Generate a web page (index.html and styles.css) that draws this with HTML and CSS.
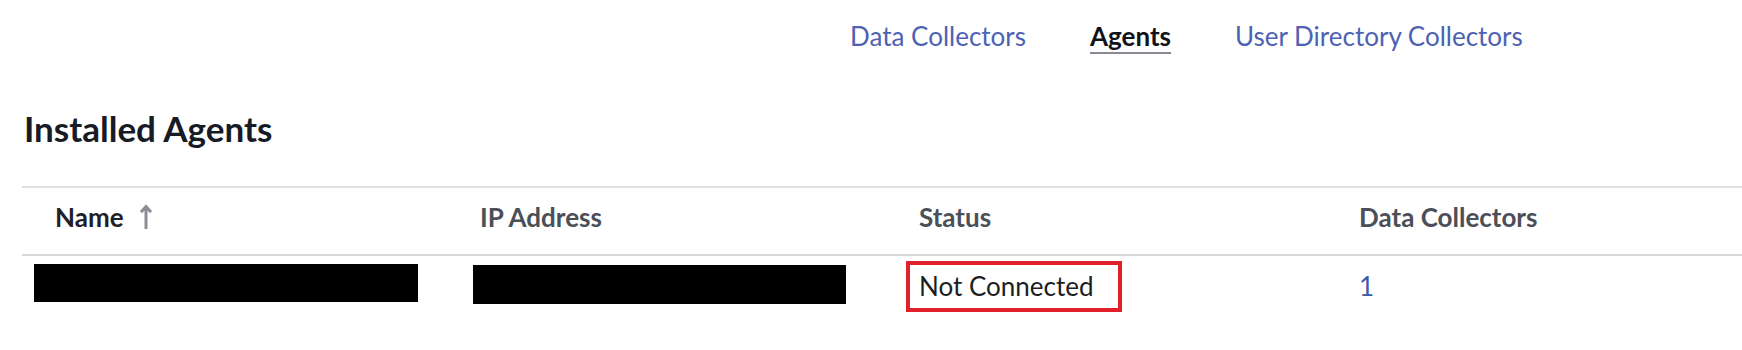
FILE: index.html
```html
<!DOCTYPE html>
<html lang="en">
<head>
<meta charset="utf-8">
<title>Installed Agents</title>
<link rel="stylesheet" href="styles.css">
</head>
<body>
<nav class="tabs">
  <a class="tab" href="#">Data Collectors</a>
  <a class="tab tab-active" href="#">Agents</a>
  <a class="tab" href="#">User Directory Collectors</a>
</nav>
<main class="content">
  <h1 class="title">Installed Agents</h1>
  <div class="table">
    <div class="row head">
      <div class="cell th sorted">Name
        <svg class="sort-icon" width="12" height="25" viewBox="0 0 12 25" aria-hidden="true">
          <path d="M6 2.5 V25 M1 8.2 L6 2.5 L11 8.2" fill="none" stroke="#8c8e96" stroke-width="3" stroke-linecap="butt" stroke-linejoin="miter"/>
        </svg>
      </div>
      <div class="cell th">IP Address</div>
      <div class="cell th">Status</div>
      <div class="cell th">Data Collectors</div>
    </div>
    <div class="row body">
      <div class="cell td name-cell"><span class="redact redact-name"></span></div>
      <div class="cell td ip-cell"><span class="redact redact-ip"></span></div>
      <div class="cell td status-cell"><span class="status-box">Not Connected</span></div>
      <div class="cell td count-cell"><a class="link" href="#">1</a></div>
    </div>
  </div>
</main>
</body>
</html>
```

FILE: styles.css
```css
* { box-sizing: border-box; }

body {
  margin: 0;
  background: #ffffff;
  font-family: "Lato", "Open Sans", sans-serif;
  color: #1f2026;
}

.tabs {
  display: flex;
  gap: 64px;
  padding: 21px 0 0 850px;
  height: 54px;
}

.tab {
  display: inline-block;
  font-size: 26px;
  line-height: 31px;
  height: 33px;
  color: #4d62b3;
  text-decoration: none;
}

.tab-active {
  color: #121318;
  font-weight: 700;
  border-bottom: 2px solid #8a8b92;
}

.content {
  padding-left: 22px;
}

.title {
  margin: 53px 0 0 0;
  font-size: 35px;
  line-height: 42px;
  font-weight: 700;
  color: #161b26;
  padding-left: 2px;
}

.table {
  margin-top: 37px;
  border-top: 2px solid #e0e0e3;
}

.row {
  display: grid;
  grid-template-columns: 425px 439px 440px 1fr;
}

.row.head {
  height: 68px;
  border-bottom: 2px solid #d8d8dc;
}

.th {
  padding: 14px 0 0 33px;
  font-size: 26px;
  line-height: 31px;
  font-weight: 700;
  color: #4b4f58;
  display: flex;
  align-items: flex-start;
}

.th.sorted {
  color: #1f2029;
}

.sort-icon {
  margin-left: 16px;
  margin-top: 2px;
}

.row.body {
  height: 74px;
}

.td {
  font-size: 26px;
  line-height: 31px;
}

.redact {
  display: block;
  background: #000000;
}

.name-cell { padding: 8px 0 0 12px; }
.redact-name { width: 384px; height: 38px; }

.ip-cell { padding: 9px 0 0 26px; }
.redact-ip { width: 373px; height: 39px; }

.status-cell { padding: 5px 0 0 20px; }

.status-box {
  display: inline-block;
  width: 216px;
  height: 51px;
  border: 4px solid #e0202b;
  padding: 6px 0 0 9px;
  color: #1d1e22;
}

.count-cell { padding: 15px 0 0 33px; }

.link {
  color: #3c5aa8;
  text-decoration: none;
}
```
